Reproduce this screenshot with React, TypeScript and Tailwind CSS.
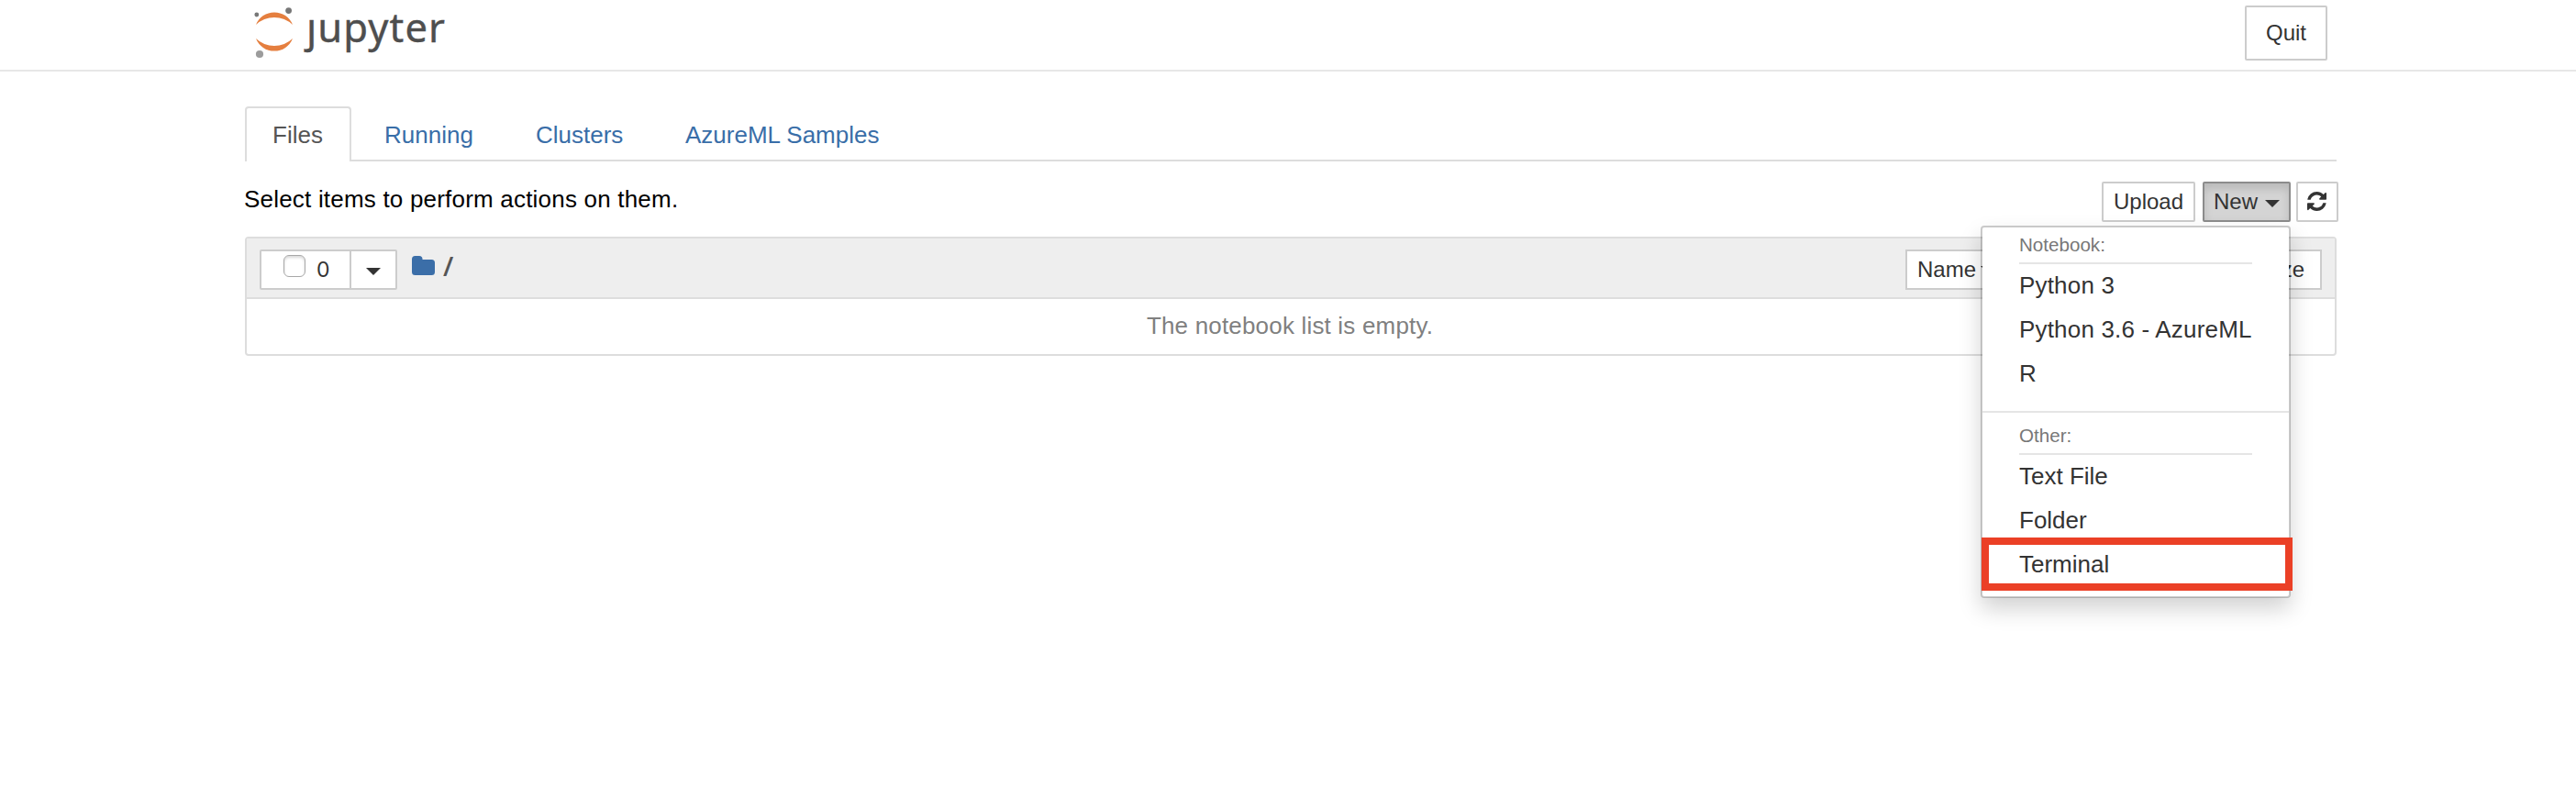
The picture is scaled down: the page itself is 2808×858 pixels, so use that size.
import type { ReactNode } from 'react';

function JupyterLogo() {
  return (
    <svg width="240" height="70" viewBox="260 0 240 70" role="img" aria-label="jupyter">
      <defs>
        <clipPath id="wordmark">
          <path d="M320 20.5H426V10H500V70H320Z" />
        </clipPath>
      </defs>
      <g fill="#e57f3f">
        <path d="M279 27A21.5 21.5 0 0 1 319 27A29 29 0 0 0 279 27Z" />
        <path d="M279 42A21.5 21.5 0 0 0 319 42A29 29 0 0 1 279 42Z" />
      </g>
      <circle cx="279.8" cy="16" r="2.4" fill="#777777" />
      <circle cx="314.6" cy="11.6" r="3.4" fill="#777777" />
      <circle cx="283" cy="59" r="4.1" fill="#9c9c9c" />
      <text
        x="334"
        y="46.3"
        fill="#4e4e4e"
        stroke="#4e4e4e"
        strokeWidth="0.4"
        fontSize="43.5"
        fontFamily="'Noto Sans', sans-serif"
        textLength="151"
        clipPath="url(#wordmark)"
      >
        jupyter
      </text>
    </svg>
  );
}

function Caret({ className = '' }: { className?: string }) {
  return (
    <svg width="16" height="8" viewBox="0 0 16 8" className={`shrink-0 ${className}`} fill="#333333" aria-hidden="true">
      <path d="M0 0H16L8 8Z" />
    </svg>
  );
}

function FolderIcon({ className = '' }: { className?: string }) {
  return (
    <svg width="25" height="21" viewBox="0 0 25 21" className={`shrink-0 ${className}`} fill="#3b6ea8" aria-hidden="true">
      <path d="M3.500 0H8A3.500 3.500 0 0 1 11.500 3.500V4H21.500A3.500 3.500 0 0 1 25 7.500V17.500A3.500 3.500 0 0 1 21.500 21H3.500A3.500 3.500 0 0 1 0 17.500V3.500A3.500 3.500 0 0 1 3.500 0Z" />
    </svg>
  );
}

function RefreshIcon() {
  return (
    <svg width="21" height="21" viewBox="0 0 1536 1536" fill="#333333" aria-hidden="true">
      <path d="M1511 928q0 5-1 7-64 268-268 434.500T764 1536q-146 0-282.500-55T238 1324l-129 129q-19 19-45 19t-45-19-19-45V960q0-26 19-45t45-19h448q26 0 45 19t19 45-19 45l-137 137q71 66 161 102t187 36q134 0 250-65t186-179q11-17 53-117 8-23 30-23h192q13 0 22.500 9.500t9.500 22.500zm25-800v448q0 26-19 45t-45 19h-448q-26 0-45-19t-19-45 19-45l138-138Q969 256 768 256q-134 0-250 65T332 500q-11 17-53 117-8 23-30 23H50q-13 0-22.500-9.500T18 608v-7q65-268 270-434.500T768 0q146 0 284 55.500T1297 212l130-129q19-19 45-19t45 19 19 45z" />
    </svg>
  );
}

function Tab({ className, children }: { className: string; children: ReactNode }) {
  return (
    <a className={`flex h-[60px] items-center pt-[3px] text-[#396ea8] ${className}`} href="#">
      {children}
    </a>
  );
}

function MenuHeader({ children }: { children: ReactNode }) {
  return (
    <div className="mx-10 h-[40px] border-b-2 border-[#e5e5e5] text-[20.6px] leading-[38px] text-[#777777]">
      {children}
    </div>
  );
}

function MenuItem({ highlighted, children }: { highlighted?: boolean; children: ReactNode }) {
  return (
    <li className="relative h-12 pl-10 leading-[46px] whitespace-nowrap">
      {children}
      {highlighted && <span className="absolute -top-[6px] -left-px h-[58px] w-[339px] border-8 border-[#eb4026]" />}
    </li>
  );
}

function NewMenu() {
  return (
    <div className="absolute top-[48px] right-0 z-10 h-[406px] w-[338px] rounded-[4px] border-2 border-black/20 bg-white bg-clip-padding text-[26px] text-[#333333] shadow-[0_12px_24px_rgba(0,0,0,0.175)]">
      <MenuHeader>Notebook:</MenuHeader>
      <ul className="h-[160px] tracking-[0.18px]">
        <MenuItem>Python 3</MenuItem>
        <MenuItem>Python 3.6 - AzureML</MenuItem>
        <MenuItem>R</MenuItem>
      </ul>
      <div className="h-[2px] bg-[#e5e5e5]" />
      <div className="pt-[6px]">
        <MenuHeader>Other:</MenuHeader>
      </div>
      <ul>
        <MenuItem>Text File</MenuItem>
        <MenuItem>Folder</MenuItem>
        <MenuItem highlighted>Terminal</MenuItem>
      </ul>
    </div>
  );
}

export default function App() {
  return (
    <div className="h-[858px] overflow-hidden bg-white font-['Liberation_Sans',Arial,sans-serif] text-[26px] text-black">
      <header className="flex h-[78px] items-start justify-between border-b-2 border-[#e7e7e7] pr-[271px] pl-[260px]">
        <JupyterLogo />
        <button className="mt-[6px] h-[60px] w-[90px] rounded-[2px] border-2 border-[#cccccc] bg-white pb-px text-[24px] text-[#333333]">
          Quit
        </button>
      </header>

      <main className="pt-[38px] pr-[261px] pl-[267px]">
        <nav className="flex h-[60px] border-b-2 border-[#dddddd]">
          <a
            href="#"
            className="flex h-[60px] w-[116px] items-center rounded-t-[4px] border-2 border-b-0 border-[#dddddd] bg-white pt-px pl-7 text-[#555555]"
          >
            Files
          </a>
          <Tab className="w-[164px] pl-[36px]">Running</Tab>
          <Tab className="w-[164px] pl-[37px]">Clusters</Tab>
          <Tab className="pl-[36px]">AzureML Samples</Tab>
        </nav>

        <div className="-mr-[2px] flex h-[82px] pt-[22px]">
          <p className="-ml-px h-[40px] leading-[38px] tracking-[0.2px]">Select items to perform actions on them.</p>
          <div className="ml-auto flex text-[24px] text-[#333333]">
            <button className="h-[44px] w-[102px] rounded-[2px] border-2 border-[#cccccc] bg-white pb-px">Upload</button>
            <div className="relative ml-[8px]">
              <button className="flex h-[44px] w-[96px] items-center rounded-[2px] border-2 border-[#8c8c8c] bg-[#d4d4d4] pb-px pl-[10px] shadow-[inset_0_6px_10px_rgba(0,0,0,0.125)]">
                New
                <Caret className="mt-[4px] ml-[8px]" />
              </button>
              <NewMenu />
            </div>
            <button className="ml-[6px] flex h-[44px] w-[46px] rounded-[2px] border-2 border-[#cccccc] bg-white pt-[9px] pl-[10px]">
              <RefreshIcon />
            </button>
          </div>
        </div>

        <section className="h-[130px] rounded-[4px] border-2 border-[#dddddd]">
          <div className="flex h-[66px] border-b-2 border-[#dddddd] bg-[#eeeeee] pt-[12px] pr-[14px] pl-[14px] text-[24px] text-[#333333]">
            <div className="flex h-[44px] w-[150px] rounded-[2px] border-2 border-[#cccccc] bg-white">
              <div className="flex w-[98px] border-r-2 border-[#cccccc] pl-[24px]">
                <span className="mt-[4px] h-6 w-6 shrink-0 rounded-[6px] border border-[#a8a8a8] bg-white shadow-[inset_0_2px_3px_rgba(0,0,0,0.15)]" />
                <span className="pl-[12px] font-[Inter,sans-serif] text-[23px] leading-[41px]">0</span>
              </div>
              <div className="flex grow pt-[18px] pl-[16px]">
                <Caret />
              </div>
            </div>
            <FolderIcon className="mt-[7px] ml-[16px]" />
            <span className="ml-[9px] font-['Open_Sans',sans-serif] text-[29px] leading-[36px] font-semibold text-[#555555]">
              /
            </span>
            <button className="ml-auto flex h-[44px] w-[142px] shrink-0 items-center border-2 border-[#cccccc] bg-white pb-px pl-[11px]">
              Name
              <Caret className="ml-[5px]" />
            </button>
            <button className="ml-[226px] h-[44px] w-[86px] shrink-0 border-2 border-[#cccccc] bg-white pr-[17px] pb-px text-right">
              Size
            </button>
          </div>
          <p className="pr-[2px] text-center leading-[58px] tracking-[0.18px] text-[#808080]">The notebook list is empty.</p>
        </section>
      </main>
    </div>
  );
}
